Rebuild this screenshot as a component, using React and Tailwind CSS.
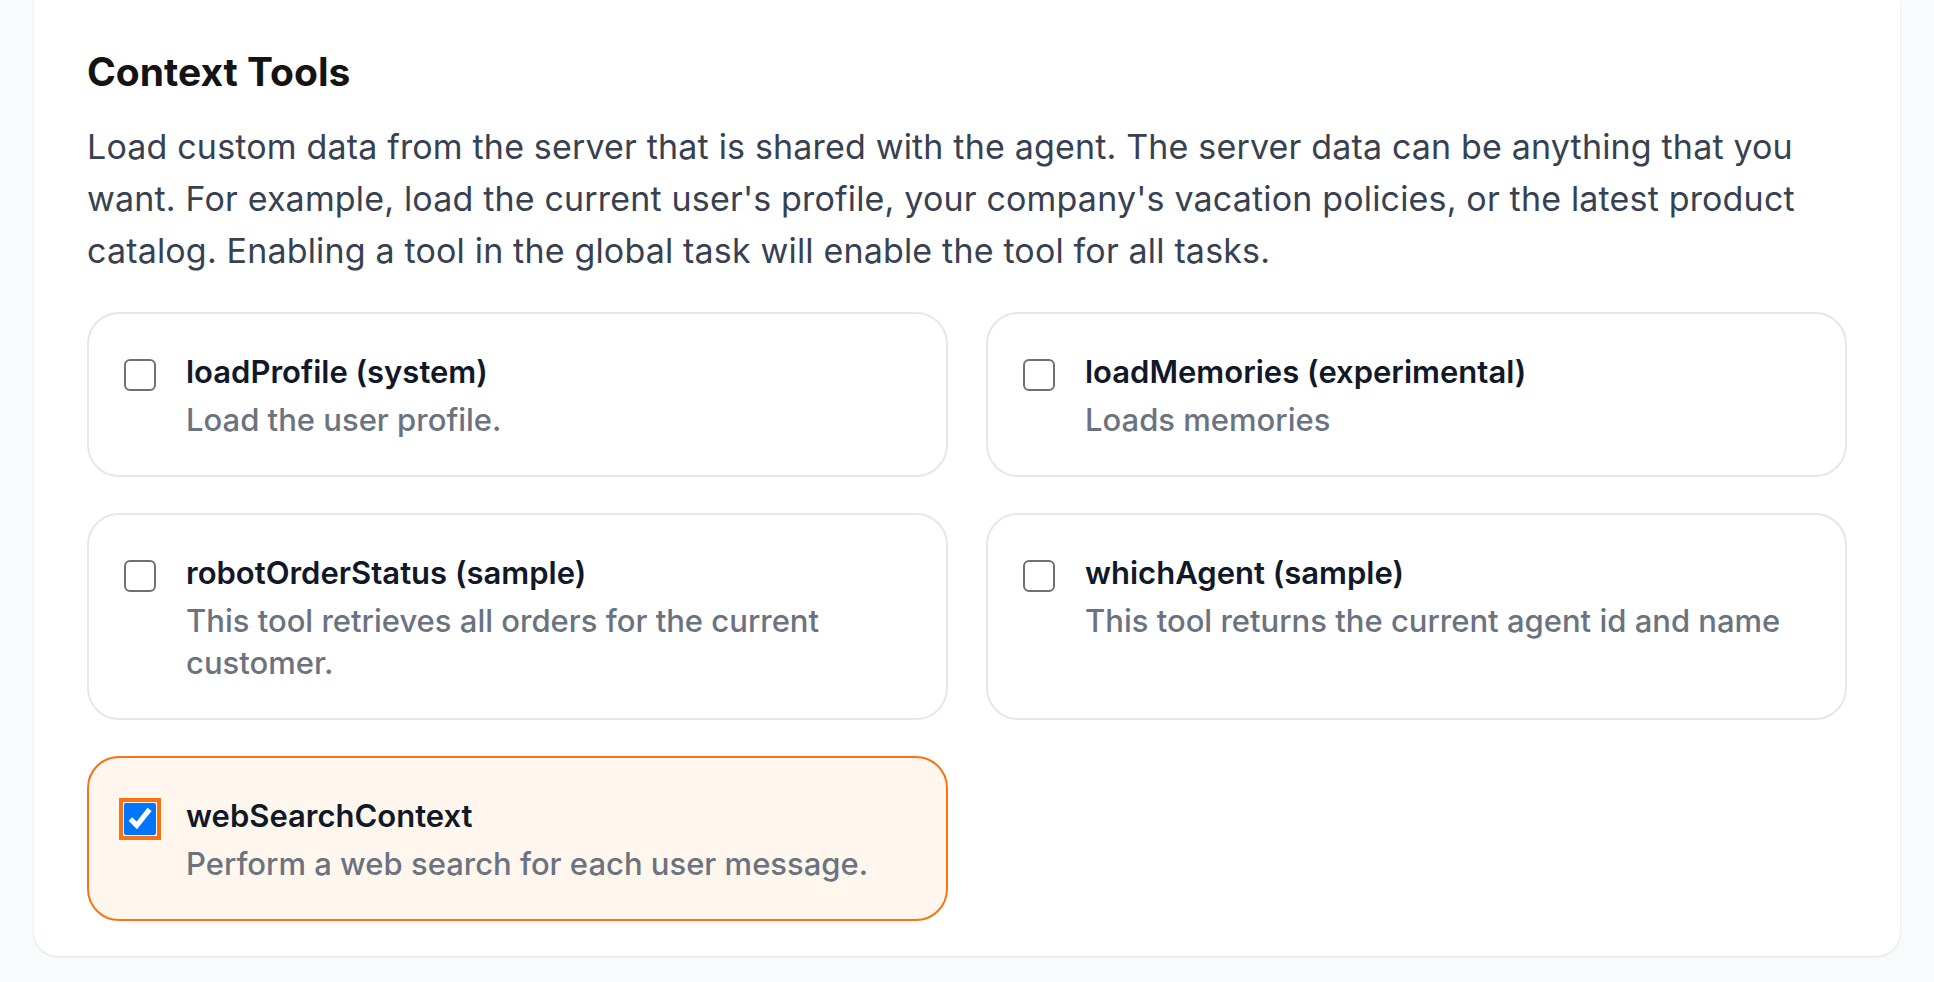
import { useState } from "react";

const TOOLS = [
  { id: "loadProfile", name: "loadProfile (system)", desc: "Load the user profile." },
  { id: "loadMemories", name: "loadMemories (experimental)", desc: "Loads memories" },
  {
    id: "robotOrderStatus",
    name: "robotOrderStatus (sample)",
    desc: "This tool retrieves all orders for the current customer.",
  },
  { id: "whichAgent", name: "whichAgent (sample)", desc: "This tool returns the current agent id and name" },
  { id: "webSearchContext", name: "webSearchContext", desc: "Perform a web search for each user message." },
];

export default function App() {
  const [enabled, setEnabled] = useState({ webSearchContext: true });

  const toggle = (id) => setEnabled((prev) => ({ ...prev, [id]: !prev[id] }));

  return (
    <div
      className="min-h-screen bg-[#f9fafb] px-[34px] pb-[25px]"
      style={{ fontFamily: "Inter, 'Noto Sans', sans-serif" }}
    >
      <div className="bg-white rounded-b-[24px] shadow-[0_1px_3px_rgba(0,0,0,0.08),0_1px_2px_rgba(0,0,0,0.04)] px-[53px] pt-[48px] pb-[35px]">
        <h2 className="text-[39px] leading-[48px] font-bold text-[#141414]">Context Tools</h2>
        <p className="mt-[25px] text-[34px] leading-[52px] text-[#374151] tracking-[0.005em]">
          Load custom data from the server that is shared with the agent. The server data can be anything that you
          want. For example, load the current user's profile, your company's vacation policies, or the latest product
          catalog. Enabling a tool in the global task will enable the tool for all tasks.
        </p>

        <div className="mt-[35px] grid grid-cols-2 gap-x-[38px] gap-y-[36px]">
          {TOOLS.map((tool) => {
            const on = !!enabled[tool.id];
            return (
              <label
                key={tool.id}
                className={`flex items-start rounded-[32px] border-2 px-[34px] pt-[36px] pb-[34px] cursor-pointer ${
                  on ? "border-[#f97316] bg-[#fff7ed]" : "border-[#e5e7eb] bg-white"
                }`}
              >
                <input
                  type="checkbox"
                  checked={on}
                  onChange={() => toggle(tool.id)}
                  className={`mt-[9px] ml-[1px] w-[32px] h-[32px] shrink-0 ${
                    on
                      ? "outline-4 outline-offset-[1px] outline-[#f97316]"
                      : "appearance-none bg-white border-[2.5px] border-[#707070] rounded-[6px]"
                  }`}
                />
                <div className="ml-[30px] min-w-0">
                  <div className="text-[31px] leading-[44px] font-semibold text-[#111827]">{tool.name}</div>
                  <div className="mt-[5px] text-[31px] leading-[42px] font-medium text-[#6b7280]">{tool.desc}</div>
                </div>
              </label>
            );
          })}
        </div>
      </div>
    </div>
  );
}
